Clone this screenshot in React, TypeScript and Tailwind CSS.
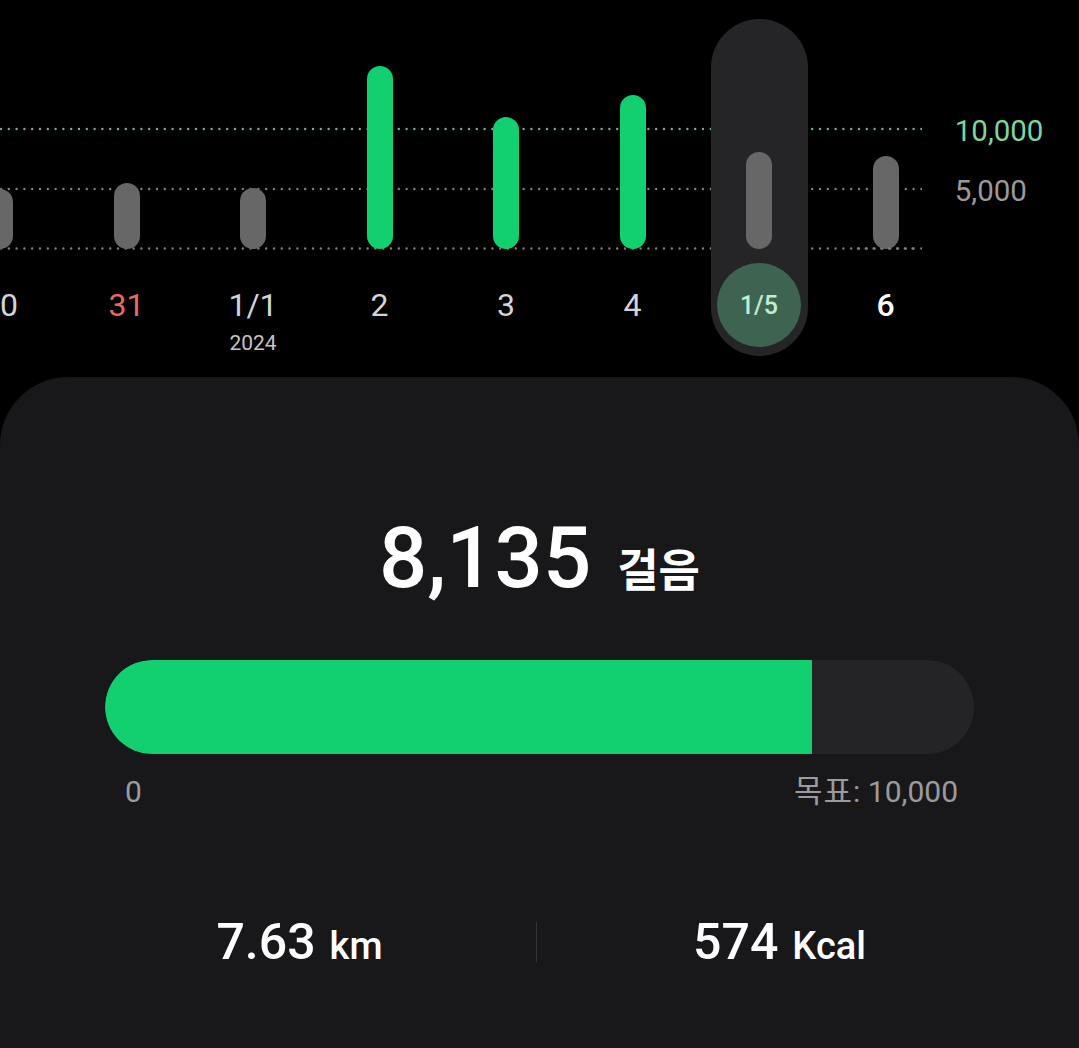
import React from "react";

type Col = { label: string; top: number; green: boolean; color: string; sub?: string; selected?: boolean; bold?: boolean };

const BOTTOM = 249;

const cols: Col[] = [
  { label: "30", top: 189, green: false, color: "text-[#d4d4d4]" },
  { label: "31", top: 183, green: false, color: "text-[#e86a66]" },
  { label: "1/1", top: 188, green: false, color: "text-[#d4d4d4]", sub: "2024" },
  { label: "2", top: 66, green: true, color: "text-[#d4d4d4]" },
  { label: "3", top: 117, green: true, color: "text-[#d4d4d4]" },
  { label: "4", top: 95, green: true, color: "text-[#d4d4d4]" },
  { label: "1/5", top: 152, green: false, color: "text-[#bdeed2]", selected: true },
  { label: "6", top: 156, green: false, color: "text-white", bold: true },
];

const font = { fontFamily: "Roboto, 'Noto Sans CJK KR', sans-serif" };

function Column({ c }: { c: Col }) {
  return (
    <div className="w-[126.5px] shrink-0 flex flex-col items-center">
      <div
        className={`mt-[19px] w-[97px] pb-[9px] flex flex-col items-center rounded-full ${
          c.selected ? "bg-[#252527]" : ""
        }`}
      >
        <div className="h-[230px] w-full flex flex-col items-center justify-end">
          <div
            className={`w-[26px] rounded-full ${c.green ? "bg-[#12d06f]" : "bg-[#676767]"}`}
            style={{ height: BOTTOM - c.top }}
          />
        </div>
        <div
          className={`mt-[14px] w-[84px] h-[84px] rounded-full flex items-center justify-center ${
            c.selected ? "bg-[#3e6351]" : ""
          }`}
        >
          <span
            className={`${c.selected ? "text-[25px] font-medium" : "text-[32px]"} ${
              c.bold ? "font-medium" : ""
            } leading-none ${c.color}`}
          >
            {c.label}
          </span>
        </div>
        {c.sub ? (
          <div className="-mt-[14px] text-[21px] leading-[21px] text-[#c4c4c4]">{c.sub}</div>
        ) : null}
      </div>
    </div>
  );
}

export default function App() {
  return (
    <div className="w-[1079px] h-[1048px] bg-black overflow-hidden" style={font}>
      {/* chart */}
      <div className="relative h-[377px] overflow-hidden">
        <svg className="absolute left-0 top-0" width="922" height="377">
          <line x1="1" y1="129" x2="922" y2="129" stroke="#72b48a" strokeWidth="2.4" strokeLinecap="round" strokeDasharray="0 7.8" />
          <line x1="1" y1="189" x2="922" y2="189" stroke="#808080" strokeWidth="2.4" strokeLinecap="round" strokeDasharray="0 7.8" />
          <line x1="1" y1="248.5" x2="922" y2="248.5" stroke="#808080" strokeWidth="2.4" strokeLinecap="round" strokeDasharray="0 7.8" />
        </svg>
        <div className="relative flex -ml-[63.25px]">
          {cols.map((c, i) => (
            <Column key={i} c={c} />
          ))}
          <div className="ml-[6px] pt-[116px] flex flex-col gap-[30px]">
            <div className="text-[29.5px] leading-[30px] text-[#7fd59e]">10,000</div>
            <div className="text-[29.5px] leading-[30px] text-[#9a9a9a]">5,000</div>
          </div>
        </div>
        {/* bottom dotted line over the last gray bar */}
        <svg className="absolute left-[855px] top-[240px]" width="60" height="16">
          <line x1="3" y1="8.5" x2="60" y2="8.5" stroke="#808080" strokeWidth="2.4" strokeLinecap="round" strokeDasharray="0 7.8" />
        </svg>
      </div>

      {/* card */}
      <div className="h-[740px] rounded-[68px] bg-[#18181a] pt-[138px]">
        <div className="flex items-baseline justify-center h-[86px]">
          <span className="text-[85px] leading-[86px] font-medium text-white">8,135</span>
          <span className="ml-[26px] text-[45px] leading-[45px] font-bold text-white">걸음</span>
        </div>
        <div className="mt-[59px] mx-[105px] h-[94px] rounded-full bg-[#242426] overflow-hidden">
          <div className="h-full bg-[#12d06f] rounded-l-full" style={{ width: `${(8135 / 10000) * 100}%` }} />
        </div>
        <div className="mt-[23px] ml-[125px] mr-[121px] flex justify-between text-[30px] leading-[30px] text-[#9b9b9b]">
          <span>0</span>
          <span>
            <span className="text-[31px] tracking-[1px]">목표</span>: 10,000
          </span>
        </div>
        <div className="mt-[110px] mx-[60px] flex items-center">
          <div className="flex-1 flex items-baseline justify-center text-white">
            <span className="text-[50px] leading-[50px] font-medium">7.63</span>
            <span className="ml-[14px] text-[38px] leading-[38px] font-medium">km</span>
          </div>
          <div className="w-px h-[40px] bg-[#333336] -ml-[3px] mr-[3px]" />
          <div className="flex-1 flex items-baseline justify-center text-white">
            <span className="text-[50px] leading-[50px] font-medium">574</span>
            <span className="ml-[14px] text-[38px] leading-[38px] font-medium">Kcal</span>
          </div>
        </div>
      </div>
    </div>
  );
}
